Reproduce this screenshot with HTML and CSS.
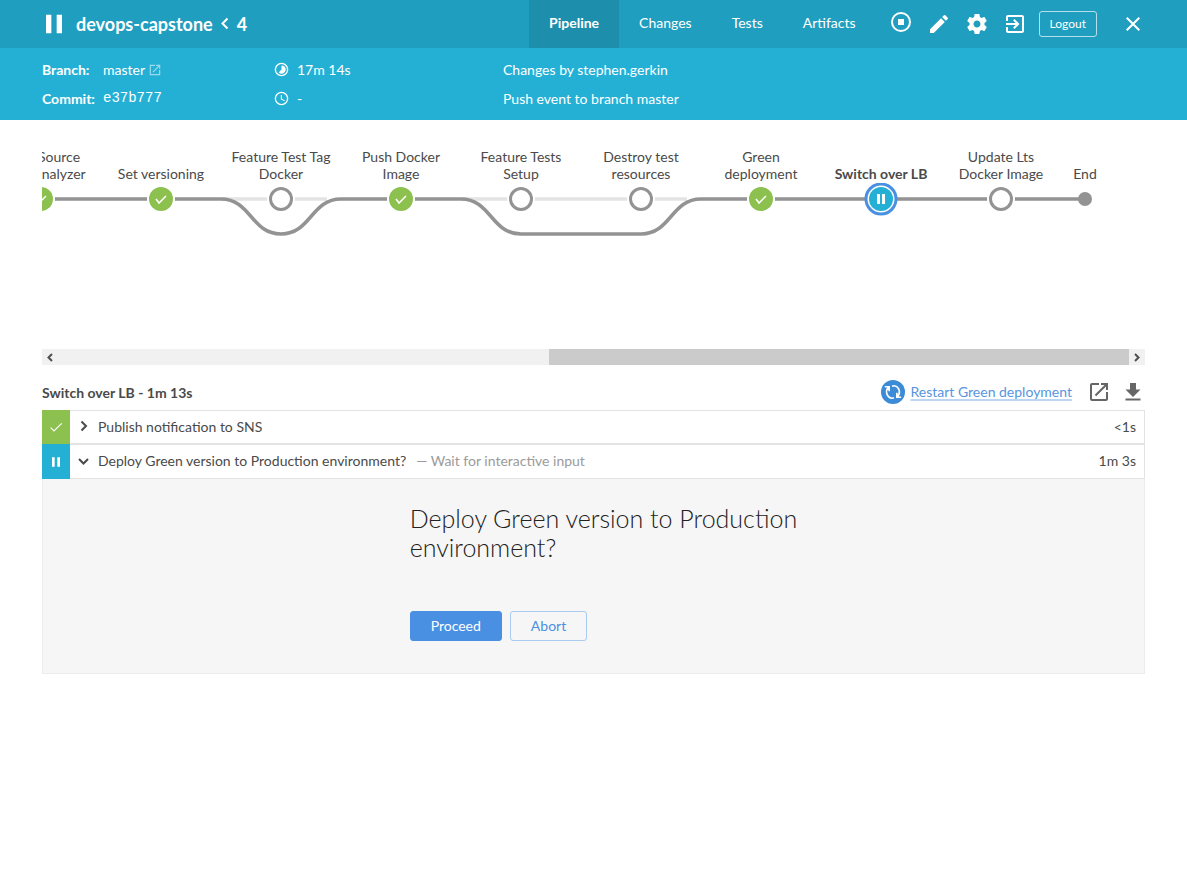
FILE: index.html
```html
<!DOCTYPE html>
<html lang="en">
<head>
<meta charset="utf-8">
<meta name="viewport" content="width=device-width, initial-scale=1">
<title>devops-capstone / master / 4</title>
<link rel="stylesheet" href="styles.css">
</head>
<body>
<header class="topbar">
  <svg class="run-state" viewBox="0 0 24 24" aria-hidden="true"><path d="M6 19h4V5H6v14zm8-14v14h4V5h-4z"/></svg>
  <h1 class="title">devops-capstone
    <svg class="title-sep" viewBox="0 0 10 14" aria-hidden="true"><path d="M7.500 1.500L2.500 6.500l5 5"/></svg>
    4</h1>
  <nav class="tabs">
    <a class="tab tab-active" href="#pipeline">Pipeline</a>
    <a class="tab" href="#changes">Changes</a>
    <a class="tab" href="#tests">Tests</a>
    <a class="tab" href="#artifacts">Artifacts</a>
  </nav>
  <div class="tools">
    <button class="icon-btn stop" aria-label="Stop"><svg viewBox="0 0 24 24"><circle cx="12" cy="12" r="9" fill="none" stroke="#fff" stroke-width="2"/><path d="M9 9h6v6H9z"/></svg></button>
    <button class="icon-btn" aria-label="Edit"><svg viewBox="0 0 24 24"><path d="M3 17.250V21h3.750L17.810 9.940l-3.750-3.750L3 17.250zM20.710 7.040a1 1 0 0 0 0-1.410l-2.340-2.340a1 1 0 0 0-1.410 0l-1.830 1.830 3.750 3.750 1.830-1.830z"/></svg></button>
    <button class="icon-btn" aria-label="Settings"><svg viewBox="0 0 24 24"><path d="M19.43 12.98c.04-.32.07-.64.07-.98s-.03-.66-.07-.98l2.11-1.65c.19-.15.24-.42.12-.64l-2-3.46c-.12-.22-.39-.3-.61-.22l-2.49 1c-.52-.4-1.08-.73-1.69-.98l-.38-2.65C14.46 2.18 14.25 2 14 2h-4c-.25 0-.46.18-.49.42l-.38 2.65c-.61.25-1.17.59-1.69.98l-2.49-1c-.23-.09-.49 0-.61.22l-2 3.46c-.13.22-.07.49.12.64l2.11 1.65c-.04.32-.07.65-.07.98s.03.66.07.98l-2.11 1.65c-.19.15-.24.42-.12.64l2 3.46c.12.22.39.3.61.22l2.49-1c.52.4 1.08.73 1.69.98l.38 2.65c.03.24.24.42.49.42h4c.25 0 .46-.18.49-.42l.38-2.65c.61-.25 1.17-.59 1.69-.98l2.49 1c.23.09.49 0 .61-.22l2-3.46c.12-.22.07-.49-.12-.64l-2.11-1.65zM12 15.5c-1.93 0-3.5-1.57-3.5-3.5s1.57-3.5 3.5-3.5 3.5 1.57 3.5 3.5-1.57 3.5-3.5 3.5z"/></svg></button>
    <button class="icon-btn" aria-label="Go to classic"><svg viewBox="0 0 24 24"><path d="M10.09 15.59L11.5 17l5-5-5-5-1.41 1.41L12.67 11H3v2h9.67l-2.58 2.59zM19 3H5a2 2 0 0 0-2 2v4h2V5h14v14H5v-4H3v4a2 2 0 0 0 2 2h14c1.100 0 2-.9 2-2V5c0-1.100-.9-2-2-2z"/></svg></button>
    <button class="logout">Logout</button>
  </div>
  <button class="icon-btn close" aria-label="Close"><svg viewBox="0 0 24 24"><path d="M19 6.410L17.590 5 12 10.590 6.410 5 5 6.410 10.590 12 5 17.590 6.410 19 12 13.410 17.590 19 19 17.590 13.410 12z"/></svg></button>
</header>

<section class="details">
  <dl class="refs">
    <dt>Branch:</dt>
    <dd><a class="branch" href="#master">master <svg class="ext" viewBox="0 0 24 24" aria-hidden="true"><path d="M19 19H5V5h7V3H3v18h18v-9h-2v7zM14 3v2h3.590l-9.830 9.830 1.410 1.410L19 6.410V10h2V3h-7z"/></svg></a></dd>
    <dt>Commit:</dt>
    <dd class="hash">e37b777</dd>
  </dl>
  <div class="times">
    <div class="time"><svg viewBox="1 1 22 22" aria-hidden="true"><path d="M16.240 7.760A5.970 5.970 0 0 0 12 6v6l-4.240 4.240a6 6 0 0 0 8.490 0 6 6 0 0 0-.01-8.480zM12 2a10 10 0 1 0 0 20 10 10 0 0 0 0-20zm0 18a8 8 0 1 1 0-16 8 8 0 0 1 0 16z"/></svg>17m 14s</div>
    <div class="time"><svg viewBox="1 1 22 22" aria-hidden="true"><path d="M12 2a10 10 0 1 0 0 20 10 10 0 0 0 0-20zm0 18a8 8 0 1 1 0-16 8 8 0 0 1 0 16zm.5-13H11v6l5.200 3.200.8-1.300-4.500-2.700V7z"/></svg>-</div>
  </div>
  <div class="causes">
    <div>Changes by stephen.gerkin</div>
    <div>Push event to branch master</div>
  </div>
</section>

<main class="content">
  <section class="pipeline">
    <div class="stages">
      <div class="stage stage-cut">Source Analyzer</div>
      <div class="stage">Set versioning</div>
      <div class="stage">Feature Test Tag Docker</div>
      <div class="stage">Push Docker Image</div>
      <div class="stage">Feature Tests Setup</div>
      <div class="stage">Destroy test resources</div>
      <div class="stage">Green deployment</div>
      <div class="stage stage-selected">Switch over LB</div>
      <div class="stage">Update Lts Docker Image</div>
      <div class="stage">End</div>
    </div>
    <svg class="graph" viewBox="0 0 1128 60" aria-hidden="true">
      <g class="skipped">
        <path d="M240 16H346M480 16H706"/>
      </g>
      <g class="line">
        <path d="M60 16H240C270 16 270 51 300 51S330 16 360 16H480C510 16 510 51 540 51H660C690 51 690 16 720 16H1104"/>
      </g>
      <g class="halo"><circle cx="60" cy="16" r="14"/><circle cx="180" cy="16" r="14"/><circle cx="300" cy="16" r="14"/><circle cx="420" cy="16" r="14"/><circle cx="540" cy="16" r="14"/><circle cx="660" cy="16" r="14"/><circle cx="780" cy="16" r="14"/><circle cx="1020" cy="16" r="14"/></g>
      <g class="done"><circle cx="60" cy="16" r="12"/><circle cx="180" cy="16" r="12"/><circle cx="420" cy="16" r="12"/><circle cx="780" cy="16" r="12"/></g>
      <path class="tick" d="M55 16l3 4 7-7M175 16l3 4 7-7M415 16l3 4 7-7M775 16l3 4 7-7"/>
      <g class="idle"><circle cx="300" cy="16" r="10.500"/><circle cx="540" cy="16" r="10.500"/><circle cx="660" cy="16" r="10.500"/><circle cx="1020" cy="16" r="10.500"/></g>
      <circle class="ring" cx="900" cy="16" r="15"/>
      <circle class="paused" cx="900" cy="16" r="12"/>
      <path class="bars" d="M896 11h3v10h-3zM901 11h3v10h-3z"/>
      <circle class="end" cx="1104" cy="16" r="7"/>
    </svg>
    <div class="scrollbar">
      <button class="arrow" aria-label="Scroll left"><svg viewBox="0 0 16 15"><path d="M10 4L6.500 7.500 10 11"/></svg></button>
      <div class="track"><div class="thumb"></div></div>
      <button class="arrow" aria-label="Scroll right"><svg viewBox="0 0 16 15"><path d="M6 4l3.500 3.500L6 11"/></svg></button>
    </div>
  </section>

  <section class="steps">
    <header class="steps-head">
      <h2 class="steps-title">Switch over LB - 1m 13s</h2>
      <a class="restart" href="#restart">
        <svg viewBox="0 0 24 24" aria-hidden="true"><circle cx="12" cy="12" r="12"/><path d="M10.500 18.200A6.400 6.400 0 0 1 7.500 7.400M3.800 6.800H8.200V11.200M13.500 5.800A6.400 6.400 0 0 1 16.500 16.600M20.200 17.200H15.800V12.800M11 6.200a6 6 0 0 1 2.500-.4M10.500 18.200a6 6 0 0 0 2.500-.4"/></svg>
        <span>Restart Green deployment</span>
      </a>
      <button class="icon-btn dark" aria-label="Open log"><svg viewBox="0 0 24 24"><path d="M19 19H5V5h7V3H5a2 2 0 0 0-2 2v14a2 2 0 0 0 2 2h14c1.100 0 2-.9 2-2v-7h-2v7zM14 3v2h3.590l-9.830 9.830 1.410 1.410L19 6.410V10h2V3h-7z"/></svg></button>
      <button class="icon-btn dark download" aria-label="Download log"><svg viewBox="0 0 24 24"><path d="M19.500 9.500h-4.500V3H9v6.500H4.500L12 17l7.500-7.500zM4.500 18.500v2h15v-2h-15z"/></svg></button>
    </header>

    <div class="step">
      <div class="status status-ok"><svg viewBox="0 0 24 24"><path d="M4 13l5 5L20.500 6.500"/></svg></div>
      <button class="step-body">
        <svg class="chevron" viewBox="0 0 12 12"><path d="M3.500 1.500L8 6 3.500 10.500"/></svg>
        <span class="step-name">Publish notification to SNS</span>
        <span class="step-time">&lt;1s</span>
      </button>
    </div>
    <div class="step">
      <div class="status status-paused"><svg viewBox="0 0 24 24"><path d="M6 5h4v14H6zM14 5h4v14h-4z"/></svg></div>
      <button class="step-body">
        <svg class="chevron" viewBox="0 0 12 12"><path d="M1 4L5.500 8.500 10 4"/></svg>
        <span class="step-name">Deploy Green version to Production environment?</span>
        <span class="step-note">— Wait for interactive input</span>
        <span class="step-time">1m 3s</span>
      </button>
    </div>
    <div class="prompt">
      <div class="prompt-inner">
        <h3 class="question">Deploy Green version to Production environment?</h3>
        <div class="actions">
          <button class="btn btn-primary">Proceed</button>
          <button class="btn">Abort</button>
        </div>
      </div>
    </div>
  </section>
</main>
</body>
</html>
```
FILE: styles.css
```css
* { box-sizing: border-box; }

body {
  margin: 0;
  background: #fff;
  color: #4a4a4a;
  font: 14px/17px Lato, "Liberation Sans", sans-serif;
}

button {
  font: inherit;
  color: inherit;
  background: none;
  border: 0;
  padding: 0;
  cursor: pointer;
}

svg { display: block; }
a { color: inherit; text-decoration: none; }

.topbar {
  display: flex;
  align-items: center;
  height: 48px;
  padding: 0 42px 0 38px;
  background: #209ebf;
  color: #fff;
}
.run-state { width: 32px; height: 32px; fill: #fff; }
.title {
  display: flex;
  align-items: center;
  gap: 7px;
  margin: 0 auto 0 6px;
  font-size: 18px;
  line-height: 24px;
}
.title-sep { width: 10px; height: 14px; fill: none; stroke: #fff; stroke-width: 2; }

.tabs { display: flex; align-self: stretch; }
.tab { padding: 0 20px; line-height: 46px; }
.tab-active { background: #1d8eac; font-weight: 700; }

.tools { display: flex; align-items: center; gap: 14px; padding-left: 13px; }
.icon-btn { width: 24px; height: 24px; fill: #fff; }
.stop { margin-bottom: 4px; }
.logout {
  height: 26px;
  padding: 0 10px 2px;
  margin-left: -2px;
  border: 1px solid #b5dfec;
  border-radius: 3px;
  font-size: 12px;
}
.close { margin-left: 24px; }

.details {
  display: grid;
  grid-template-columns: 232px 229px 1fr;
  padding: 7px 42px;
  background: #24b0d5;
  color: #fff;
  line-height: 29px;
}
.refs { display: grid; grid-template-columns: 61px 1fr; margin: 0; }
.refs dt { font-weight: 700; }
.refs dd { margin: 0; }
.branch { display: flex; align-items: center; gap: 3px; }
.ext { width: 14px; height: 14px; fill: #9cdbed; }
.hash { font-family: "Liberation Mono", monospace; }
.time { display: flex; align-items: center; gap: 8px; }
.time svg { width: 15px; height: 15px; fill: #fff; }

.content { padding: 0 42px; }

.pipeline { overflow: hidden; padding-top: 28px; }
.stages {
  display: grid;
  grid-template-columns: repeat(9, 120px) 48px;
  align-items: end;
  margin-left: -61px;
  text-align: center;
}
.stage { padding: 0 8px; }
.stage-cut { padding-left: 44px; }
.stage-selected { font-weight: 700; }
.stage:last-child { padding: 0; }

.graph { width: 1128px; height: 60px; margin: 1px 0 0 -61px; }
.skipped, .line { fill: none; stroke-width: 3.5; }
.skipped { stroke: #e3e3e3; }
.line { stroke: #949393; }
.halo { fill: #fff; }
.done { fill: #8cc04f; }
.tick { fill: none; stroke: #fff; stroke-width: 1.5; }
.idle { fill: #fff; stroke: #949393; stroke-width: 3; }
.ring { fill: #fff; stroke: #4a90e2; stroke-width: 3; }
.paused { fill: #24b0d5; }
.bars { fill: #fff; }
.end { fill: #949393; }

.scrollbar { display: flex; height: 16px; margin-top: 106px; background: #f1f1f1; }
.arrow { width: 16px; }
.arrow svg { width: 16px; height: 15px; fill: none; stroke: #505050; stroke-width: 2; }
.track { display: flex; flex: 1; justify-content: flex-end; }
.thumb { width: 54.2%; background: #cbcbcb; }

.steps-head { display: flex; align-items: center; height: 45px; padding-top: 9px; }
.steps-title { margin: 0 auto 0 0; font-size: 14px; }
.restart { display: flex; align-items: center; gap: 5px; margin-right: 15px; color: #5795de; }
.restart span {
  padding-bottom: 2px;
  text-decoration: underline 2px #bdd6f4;
  text-decoration-skip-ink: none;
  text-underline-offset: 2px;
}
.restart svg { width: 24px; height: 24px; }
.restart circle { fill: #3b8bd6; }
.restart path { fill: none; stroke: #fff; stroke-width: 1.6; }
.dark { fill: #666; }
.download { margin-left: 10px; }

.step { display: flex; height: 35px; }
.step:first-of-type { height: 34px; }
.status { display: grid; place-items: center; width: 28px; }
.status svg { width: 16px; height: 16px; }
.status-ok { background: #8cc04f; }
.status-ok path { fill: none; stroke: #fff; stroke-width: 1.8; }
.status-paused { background: #24b0d5; fill: #fff; }
.step-body {
  display: flex;
  flex: 1;
  align-items: center;
  padding: 0 8px 2px;
  border: 1px solid #e3e3e3;
  border-left: 0;
  text-align: left;
}
.chevron { width: 12px; height: 12px; fill: none; stroke: #4a4a4a; stroke-width: 2; }
.step-name { margin-left: 8px; }
.step-note { margin-left: 10px; color: #9b9b9b; }
.step-time { margin-left: auto; }

.prompt {
  padding: 25px 0 32px;
  background: #f6f6f6;
  border: 1px solid #ececec;
  border-top: 0;
}
.prompt-inner { width: 400px; max-width: 60%; margin-left: 33.3%; }
.question { margin: 0 0 49px; color: #222; font-size: 25px; font-weight: 300; line-height: 29px; }
.actions { display: flex; gap: 8px; }
.btn {
  height: 30px;
  padding: 0 20px 2px;
  border: 1px solid #a9cbf1;
  border-radius: 3px;
  color: #4a90e2;
}
.btn-primary { background: #4a90e2; border-color: #4a90e2; color: #fff; }
```
